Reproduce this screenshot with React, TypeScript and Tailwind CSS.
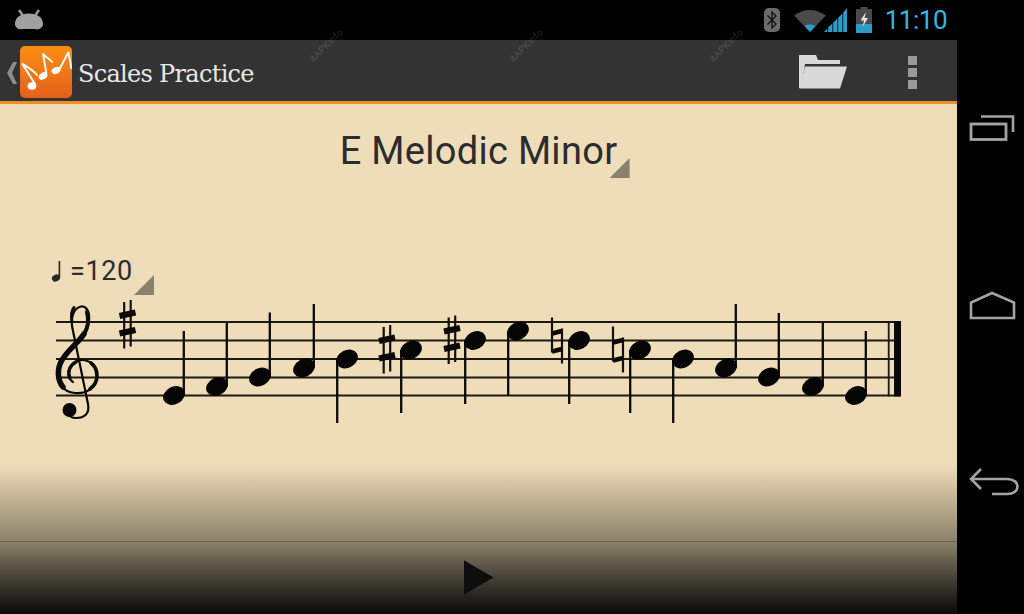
import React from "react";

// [x, y, stemTipY] of each note, stem goes up if tip is above the head
const notes: [number, number, number][] = [
  [174, 395.5, 331],
  [217, 386.5, 322.5],
  [260, 377, 312.5],
  [304, 368, 304],
  [347, 359, 423],
  [411, 350, 413],
  [475, 340.5, 404],
  [518, 331, 395.5],
  [579, 340.5, 404],
  [640, 350, 413],
  [683, 359, 423],
  [726, 368, 304],
  [769, 377, 313],
  [813, 386.5, 322.5],
  [856, 395.5, 331],
];

const staffLines = [322, 340.5, 359, 377.5, 395.5];

function Sharp({ x, y }: { x: number; y: number }) {
  return (
    <g>
      <path d={`M${x - 3.3} ${y - 23}V${y + 23.5}M${x + 3.2} ${y - 25}V${y + 21.5}`} stroke="#111" strokeWidth="2.2" />
      <path d={`M${x - 8} ${y - 9}L${x + 8} ${y - 12.5}M${x - 8} ${y + 8.5}L${x + 8} ${y + 5}`} stroke="#0a0a0a" strokeWidth="6" />
    </g>
  );
}

function Natural({ x, y }: { x: number; y: number }) {
  return (
    <g>
      <path d={`M${x - 5} ${y - 23}V${y + 12}M${x + 5} ${y - 12}V${y + 23}`} stroke="#111" strokeWidth="2.2" />
      <path d={`M${x - 5} ${y - 7}L${x + 5} ${y - 9.5}M${x - 5} ${y + 11}L${x + 5} ${y + 8.5}`} stroke="#0a0a0a" strokeWidth="4.6" />
    </g>
  );
}

function Staff() {
  return (
    <svg width="957" height="135" viewBox="0 295 957 135" className="block">
      {staffLines.map((y) => (
        <line key={y} x1="56" x2="900" y1={y} y2={y} stroke="#1d1a14" strokeWidth="2" />
      ))}
      <line x1="888.7" x2="888.7" y1="321" y2="396.5" stroke="#1d1a14" strokeWidth="1.8" />
      <rect x="894" y="321" width="7" height="75.5" fill="#0a0a0a" />
      {/* treble clef */}
      <g fill="none" stroke="#0a0a0a" strokeLinecap="round">
        <path d="M73 382C67 378 66 368 75 362C84 357 97 362 97 376C97 388 86 394 75 393C62 392 57 382 58 370C60 358 72 348 80 338C86 331 90 325 89 315C88 308 84 306 81 306.5C74 308 71 316 72 326L88 404C90 414 84 418 76 418C72 418 69 416 68 413" strokeWidth="2.2" />
        <path d="M63 387C57 380 57 368 62 360C68 350 78 343 84 334" strokeWidth="5.5" />
        <path d="M84 334C88 328 89 320 87 312" strokeWidth="4" />
        <path d="M74 307.5C72 310 71 316 72 322" strokeWidth="3" />
        <path d="M90 389C94 386 97 381 97 376C97 371 95 366 91 363" strokeWidth="3.6" />
        <path d="M70 378C67 372 70 365 76 362" strokeWidth="3.2" />
      </g>
      <circle cx="69.5" cy="410" r="7" fill="#0a0a0a" />
      <Sharp x={127.5} y={325} />
      <Sharp x={387} y={350} />
      <Sharp x={452} y={340.5} />
      <Natural x={557} y={340.5} />
      <Natural x={618} y={349.5} />
      {notes.map(([x, y, tip]) => {
        const up = tip < y;
        const sx = up ? x + 9.8 : x - 9.8;
        return (
          <g key={x}>
            <line x1={sx} x2={sx} y1={y} y2={tip} stroke="#0a0a0a" strokeWidth="2.3" />
            <ellipse cx={x} cy={y} rx="11.4" ry="8.8" transform={`rotate(-28 ${x} ${y})`} fill="#050505" />
          </g>
        );
      })}
    </svg>
  );
}

function Corner() {
  return <div className="w-5 h-5 bg-[#8b806c] [clip-path:polygon(100%_0,100%_100%,0_100%)]" />;
}

function StatusBar() {
  return (
    <div className="h-10 bg-black flex items-center shrink-0 relative">
      <svg width="30" height="22" viewBox="0 0 30 22" className="ml-[14px]">
        <path d="M5 1L8.5 6M25 1L21.5 6" stroke="#9a9a9a" strokeWidth="2.4" />
        <path d="M1 15C1 8 7 4.5 15 4.5S29 8 29 15C29 19 25 21 21 20H9C5 21 1 19 1 15Z" fill="#a0a0a0" />
      </svg>
      <div className="ml-auto flex items-center">
        <svg width="16" height="24" viewBox="0 0 16 24">
          <rect width="16" height="24" rx="5" fill="#6b6b6b" />
          <path d="M3.5 7.5L12 16L8 20V4L12 8L3.5 16.5" fill="none" stroke="#111" strokeWidth="1.3" />
        </svg>
        <svg width="53" height="26" viewBox="0 0 53 26" className="ml-[14px]">
          <path d="M0 8.5C9 1 22 1 32 8.5L16 25Z" fill="#4a4a4a" />
          <path d="M10.5 19C13.5 17 18.5 17 21.5 19L16 25Z" fill="#2e9cc9" />
          <path d="M30 25H33.4V21.5ZM34.2 25H38.4V16.5L34.2 20.6ZM39.2 25H43.4V11.5L39.2 15.7ZM44.2 25H48.4V6.5L44.2 10.7ZM49.2 25H53V1L49.2 5.7Z" fill="#2e9cc9" />
        </svg>
        <svg width="16" height="26" viewBox="0 0 16 26" className="ml-[9px]">
          <rect x="4.5" y="0" width="7" height="3" fill="#4a4a4a" />
          <rect x="0" y="2" width="16" height="15" fill="#4a4a4a" />
          <rect x="0" y="17" width="16" height="9" fill="#2e9cc9" />
          <path d="M10 5L4.5 13.5H8L6.5 20L12 11H8.5Z" fill="#e6e6e6" />
        </svg>
        <span className="ml-[13px] mr-[10px] font-['Roboto',sans-serif] text-[26px] leading-none tracking-[-0.5px] text-[#33b5e5]">11:10</span>
      </div>
    </div>
  );
}

function AppIcon() {
  return (
    <svg width="52" height="52" viewBox="0 0 52 52">
      <defs>
        <linearGradient id="ic" x1="0" y1="0" x2="0" y2="1">
          <stop offset="0" stopColor="#fb8f14" />
          <stop offset="1" stopColor="#e4611c" />
        </linearGradient>
      </defs>
      <rect width="52" height="52" rx="5" fill="url(#ic)" />
      <g fill="#fff">
        <ellipse cx="12" cy="40" rx="4.4" ry="3.8" />
        <ellipse cx="23" cy="30" rx="4.6" ry="3.3" transform="rotate(-30 23 30)" />
        <ellipse cx="36" cy="24.5" rx="4.6" ry="3.3" transform="rotate(-25 36 24.5)" />
      </g>
      <g fill="none" stroke="#fff" strokeWidth="1.9" strokeLinecap="round">
        <path d="M15 38L2 17.5C7 21 13 24 17 29" />
        <path d="M26.5 28L23 7.5C25 11 29 12 32 16" />
        <path d="M39.5 23L48.5 6C48.5 11 51 16 51 22" />
      </g>
    </svg>
  );
}

function ActionBar() {
  return (
    <div className="h-[64px] shrink-0 bg-[#333333] border-b-[3px] border-[#f68b1f] flex items-start relative">
      <svg width="10" height="22" viewBox="0 0 10 22" className="ml-[7px] mt-[22px]">
        <path d="M10 0H6L0 11L6 22H10L5 11Z" fill="#8c8c8c" />
      </svg>
      <div className="ml-[3px] mt-[6px]">
        <AppIcon />
      </div>
      <span className="ml-[6px] mt-[18px] font-['DejaVu_Serif',serif] text-[24px] leading-[32px] text-[#e8e8e8] tracking-[-0.7px]">
        Scales Practice
      </span>
      <svg width="48" height="34" viewBox="0 0 48 34" className="ml-auto mt-[15px]">
        <path d="M0 0H17L19 5H41V9H6L2 33H0Z" fill="#d9d9d9" />
        <path d="M6 11.5H48L41 33.5H0.5Z" fill="#d9d9d9" />
      </svg>
      <div className="ml-[61px] mr-[40px] mt-[16px] flex flex-col gap-[3px]">
        <div className="w-[9px] h-[9px] bg-[#9a9a9a]" />
        <div className="w-[9px] h-[9px] bg-[#9a9a9a]" />
        <div className="w-[9px] h-[9px] bg-[#9a9a9a]" />
      </div>
      <span className="absolute left-[305px] top-[-2px] -rotate-45 text-[10px] text-white/15">4APKInfo</span>
      <span className="absolute left-[505px] top-[-2px] -rotate-45 text-[10px] text-white/15">4APKInfo</span>
      <span className="absolute left-[705px] top-[-2px] -rotate-45 text-[10px] text-white/15">4APKInfo</span>
      <div className="absolute left-0 right-0 bottom-0 h-px bg-[#1f3a44]" />
    </div>
  );
}

function NavBar() {
  return (
    <div className="w-[67px] bg-black flex flex-col items-start shrink-0">
      <svg width="67" height="40" viewBox="0 0 67 40" className="mt-[110px]">
        <path d="M24 6.5H56V22" fill="none" stroke="#a3a3a3" strokeWidth="2.6" />
        <rect x="14" y="14" width="35" height="15.5" fill="none" stroke="#a3a3a3" strokeWidth="2.8" />
      </svg>
      <svg width="67" height="34" viewBox="0 0 67 34" className="mt-[141px]">
        <path d="M14 27V11.5L35 2L57 11.5V27Z" fill="none" stroke="#a3a3a3" strokeWidth="2.6" />
      </svg>
      <svg width="67" height="34" viewBox="0 0 67 34" className="mt-[142px]">
        <path d="M24 2L14 12L24 22M14 12H50C64 12 64 27 50 27H35" fill="none" stroke="#a3a3a3" strokeWidth="2.6" />
      </svg>
    </div>
  );
}

export default function App() {
  return (
    <div className="w-[1024px] h-[614px] flex overflow-hidden bg-black font-['Roboto',sans-serif]">
      <div className="w-[957px] flex flex-col shrink-0">
        <StatusBar />
        <ActionBar />
        <div className="flex-1 flex flex-col bg-[#efddb9] min-h-0">
          <div className="flex justify-center pt-[24px] h-[116px] shrink-0">
            <div className="relative">
              <span className="text-[38px] leading-[46px] tracking-[0.3px] text-[#2b2c2e]">E Melodic Minor</span>
              <div className="absolute left-[270px] top-[30px]">
                <Corner />
              </div>
            </div>
          </div>
          <div className="h-[75px] pt-[36px] pl-[50px] shrink-0">
            <div className="relative flex items-center h-[30px]">
              <svg width="12" height="24" viewBox="0 0 12 24">
                <ellipse cx="6" cy="19" rx="4.2" ry="3.4" transform="rotate(-24 6 19)" fill="#26272a" />
                <line x1="9.4" x2="9.4" y1="2" y2="18" stroke="#26272a" strokeWidth="1.6" />
              </svg>
              <span className="ml-[8px] text-[27px] leading-[30px] tracking-[0.6px] text-[#2b2c2e]">=120</span>
              <div className="absolute left-[84px] top-[19px]">
                <Corner />
              </div>
            </div>
          </div>
          <Staff />
          <div className="mt-auto h-[149px] shrink-0 flex flex-col bg-gradient-to-b from-[#efddb9] via-[#8a8069] via-[52%] to-[#0b0b0a]">
            <div className="h-[77px] shrink-0 border-b border-[#6b6350]" />
            <div className="flex-1 flex justify-center pt-[18px]">
              <div className="w-[30px] h-[35px] bg-[#0e0e0e] [clip-path:polygon(0_0,100%_50%,0_100%)]" />
            </div>
          </div>
        </div>
      </div>
      <NavBar />
    </div>
  );
}
